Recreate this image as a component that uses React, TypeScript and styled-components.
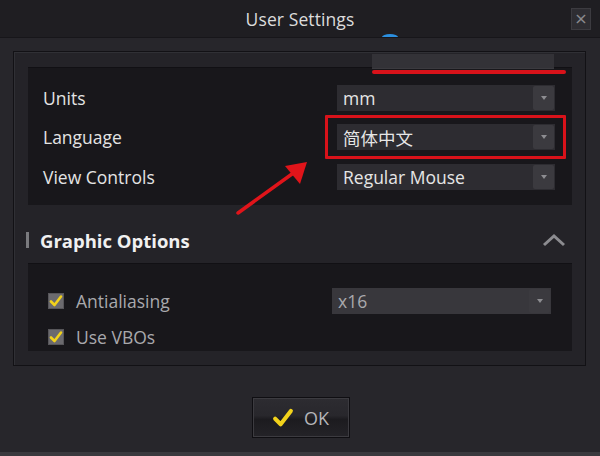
import React from 'react';
import styled, { createGlobalStyle } from 'styled-components';

const GlobalStyle = createGlobalStyle`
  html, body {
    margin: 0;
    padding: 0;
    background: #26252a;
  }
  * {
    box-sizing: border-box;
  }
`;

const Window = styled.div`
  position: relative;
  width: 600px;
  height: 456px;
  display: flex;
  flex-direction: column;
  background: #27262b;
  font-family: "Open Sans", "Noto Sans", "Noto Sans CJK SC", sans-serif;
  overflow: hidden;
  border-bottom: 4px solid #3a393e;
`;

const TitleBar = styled.div`
  position: relative;
  height: 38px;
  flex-shrink: 0;
  display: flex;
  align-items: center;
  justify-content: center;
  background: #1f1e22;
  border-bottom: 1px solid #17161a;
  color: #dcdcdc;
  font-size: 17.5px;
  letter-spacing: 0.1px;
`;

const CloseButton = styled.div`
  position: absolute;
  right: 9px;
  top: 8px;
  width: 20px;
  height: 22px;
  display: flex;
  align-items: center;
  justify-content: center;
  background: #2e2d32;
  border: 1px solid #3c3b40;
  color: #8a8a8e;
  font-size: 16px;
  font-family: "DejaVu Sans", sans-serif;
  line-height: 1;
`;

const Body = styled.div`
  flex: 1;
  display: flex;
  flex-direction: column;
  padding: 13px 14px 0 13px;
`;

const Group = styled.div`
  position: relative;
  display: flex;
  flex-direction: column;
  height: 315px;
  padding: 15px 13px 0 14px;
  background: #242328;
  border: 1px solid #121115;
  box-shadow: inset 1px 1px 0 #303035;
`;

const Panel = styled.div<{ $height: number; $pad: string }>`
  height: ${(p) => p.$height}px;
  padding: ${(p) => p.$pad};
  background: #18171b;
  border-top: 1px solid #111014;
  display: flex;
  flex-direction: column;
`;

const Row = styled.div<{ $h: number }>`
  height: ${(p) => p.$h}px;
  flex-shrink: 0;
  display: flex;
  align-items: center;
  justify-content: space-between;
`;

const Label = styled.span<{ $muted?: boolean }>`
  font-size: 17.5px;
  color: ${(p) => (p.$muted ? '#a9a9ad' : '#e4e4e4')};
`;

const SelectBox = styled.div<{ $width: number; $tone?: 'light' }>`
  position: relative;
  width: ${(p) => p.$width}px;
  height: 26px;
  display: flex;
  align-items: center;
  justify-content: space-between;
  padding-left: 6px;
  background: ${(p) => (p.$tone === 'light' ? '#38373c' : '#2d2c31')};
  color: ${(p) => (p.$tone === 'light' ? '#a9a9ad' : '#e6e6e6')};
  font-size: 17.5px;
`;

const SelectArrow = styled.div`
  width: 21px;
  height: 24px;
  margin-right: 1px;
  display: flex;
  align-items: center;
  justify-content: center;
  background: #3b3a3f;
  border-radius: 2px;
  &::after {
    content: '';
    border-left: 3px solid transparent;
    border-right: 3px solid transparent;
    border-top: 4px solid #8d8d91;
  }
`;

const Highlight = styled.div`
  position: absolute;
  left: -12px;
  right: -11px;
  top: -9px;
  bottom: -9px;
  border: 3px solid #d8121a;
  border-radius: 1px;
  pointer-events: none;
`;

const SectionHeader = styled.div`
  height: 58px;
  display: flex;
  align-items: center;
  justify-content: space-between;
  padding: 12px 6px 0 0;
`;

const SectionTitle = styled.div`
  display: flex;
  align-items: center;
  gap: 11px;
  color: #f0f0f0;
  font-weight: 700;
  font-size: 18.5px;
  &::before {
    content: '';
    width: 3px;
    height: 16px;
    margin-left: -2px;
    background: #7a7a7e;
  }
`;

const CheckRow = styled.div<{ $h: number }>`
  height: ${(p) => p.$h}px;
  flex-shrink: 0;
  display: flex;
  align-items: center;
  gap: 12px;
`;

const CheckBox = styled.div`
  width: 16px;
  height: 16px;
  background: #6b6a6e;
  border: 1px solid #57565a;
  display: flex;
  align-items: center;
  justify-content: center;
`;

const Footer = styled.div`
  flex: 1;
  display: flex;
  justify-content: center;
  align-items: flex-start;
  padding-top: 31px;
  padding-left: 2px;
`;

const OkButton = styled.div`
  width: 98px;
  height: 41px;
  display: flex;
  align-items: center;
  justify-content: center;
  gap: 10px;
  background: linear-gradient(#2d2c31 0%, #28272c 45%, #1c1b1f 55%, #242328 100%);
  border: 1px solid #0f0e12;
  box-shadow: inset 0 0 0 1px #3c3b40;
  color: #b5b5b9;
  font-size: 18px;
`;

const AnnotationTop = styled.div`
  position: absolute;
  left: 356px;
  top: 1px;
  width: 196px;
  height: 22px;
  &::before {
    content: '';
    position: absolute;
    left: 2px;
    right: 12px;
    top: 1px;
    height: 14px;
    background: #333237;
    border-bottom: 1px solid #3b3a3f;
  }
  &::after {
    content: '';
    position: absolute;
    left: 2px;
    right: 0;
    top: 17px;
    height: 4px;
    background: #d8121a;
    border-radius: 2px;
  }
`;

const BlueMark = styled.div`
  position: absolute;
  left: 382px;
  top: 34px;
  width: 16px;
  height: 6px;
  border-top: 3px solid #2b8fe0;
  border-radius: 50% 50% 0 0;
`;

const ArrowOverlay = styled.svg`
  position: absolute;
  left: 0;
  top: 0;
  pointer-events: none;
`;

const Check = ({ size = 14 }: { size?: number }) => (
  <svg width={size} height={size} viewBox="0 0 14 14">
    <path d="M2 7.5 L5.5 11 L12 2.5" fill="none" stroke="#f2d21b" strokeWidth="2.6" strokeLinecap="round" strokeLinejoin="round" />
  </svg>
);

const ChevronUp = () => (
  <svg width="24" height="14" viewBox="0 0 24 14">
    <path d="M2 12 L12 3 L22 12" fill="none" stroke="#8c8c90" strokeWidth="3" />
  </svg>
);

export default function App() {
  return (
    <>
      <GlobalStyle />
      <Window>
        <TitleBar>
          User Settings
          <CloseButton>×</CloseButton>
        </TitleBar>
        <BlueMark />
        <Body>
          <Group>
            <AnnotationTop />
            <Panel $height={138} $pad="10px 17px 0 15px">
              <Row $h={39}>
                <Label>Units</Label>
                <SelectBox $width={218}>
                  mm
                  <SelectArrow />
                </SelectBox>
              </Row>
              <Row $h={40}>
                <Label>Language</Label>
                <SelectBox $width={218}>
                  简体中文
                  <SelectArrow />
                  <Highlight />
                </SelectBox>
              </Row>
              <Row $h={39}>
                <Label>View Controls</Label>
                <SelectBox $width={218}>
                  Regular Mouse
                  <SelectArrow />
                </SelectBox>
              </Row>
            </Panel>
            <SectionHeader>
              <SectionTitle>Graphic Options</SectionTitle>
              <ChevronUp />
            </SectionHeader>
            <Panel $height={88} $pad="21px 21px 0 20px">
              <Row $h={32}>
                <CheckRow $h={32}>
                  <CheckBox>
                    <Check />
                  </CheckBox>
                  <Label $muted>Antialiasing</Label>
                </CheckRow>
                <SelectBox $width={219} $tone="light">
                  x16
                  <SelectArrow />
                </SelectBox>
              </Row>
              <CheckRow $h={40}>
                <CheckBox>
                  <Check />
                </CheckBox>
                <Label $muted>Use VBOs</Label>
              </CheckRow>
            </Panel>
          </Group>
          <Footer>
            <OkButton>
              <Check size={22} />
              OK
            </OkButton>
          </Footer>
        </Body>
        <ArrowOverlay width="600" height="456">
          <line x1="238" y1="213" x2="292" y2="174" stroke="#e0141a" strokeWidth="3.5" strokeLinecap="round" />
          <polygon points="307,162 285,166 300,184" fill="#e0141a" />
        </ArrowOverlay>
      </Window>
    </>
  );
}
